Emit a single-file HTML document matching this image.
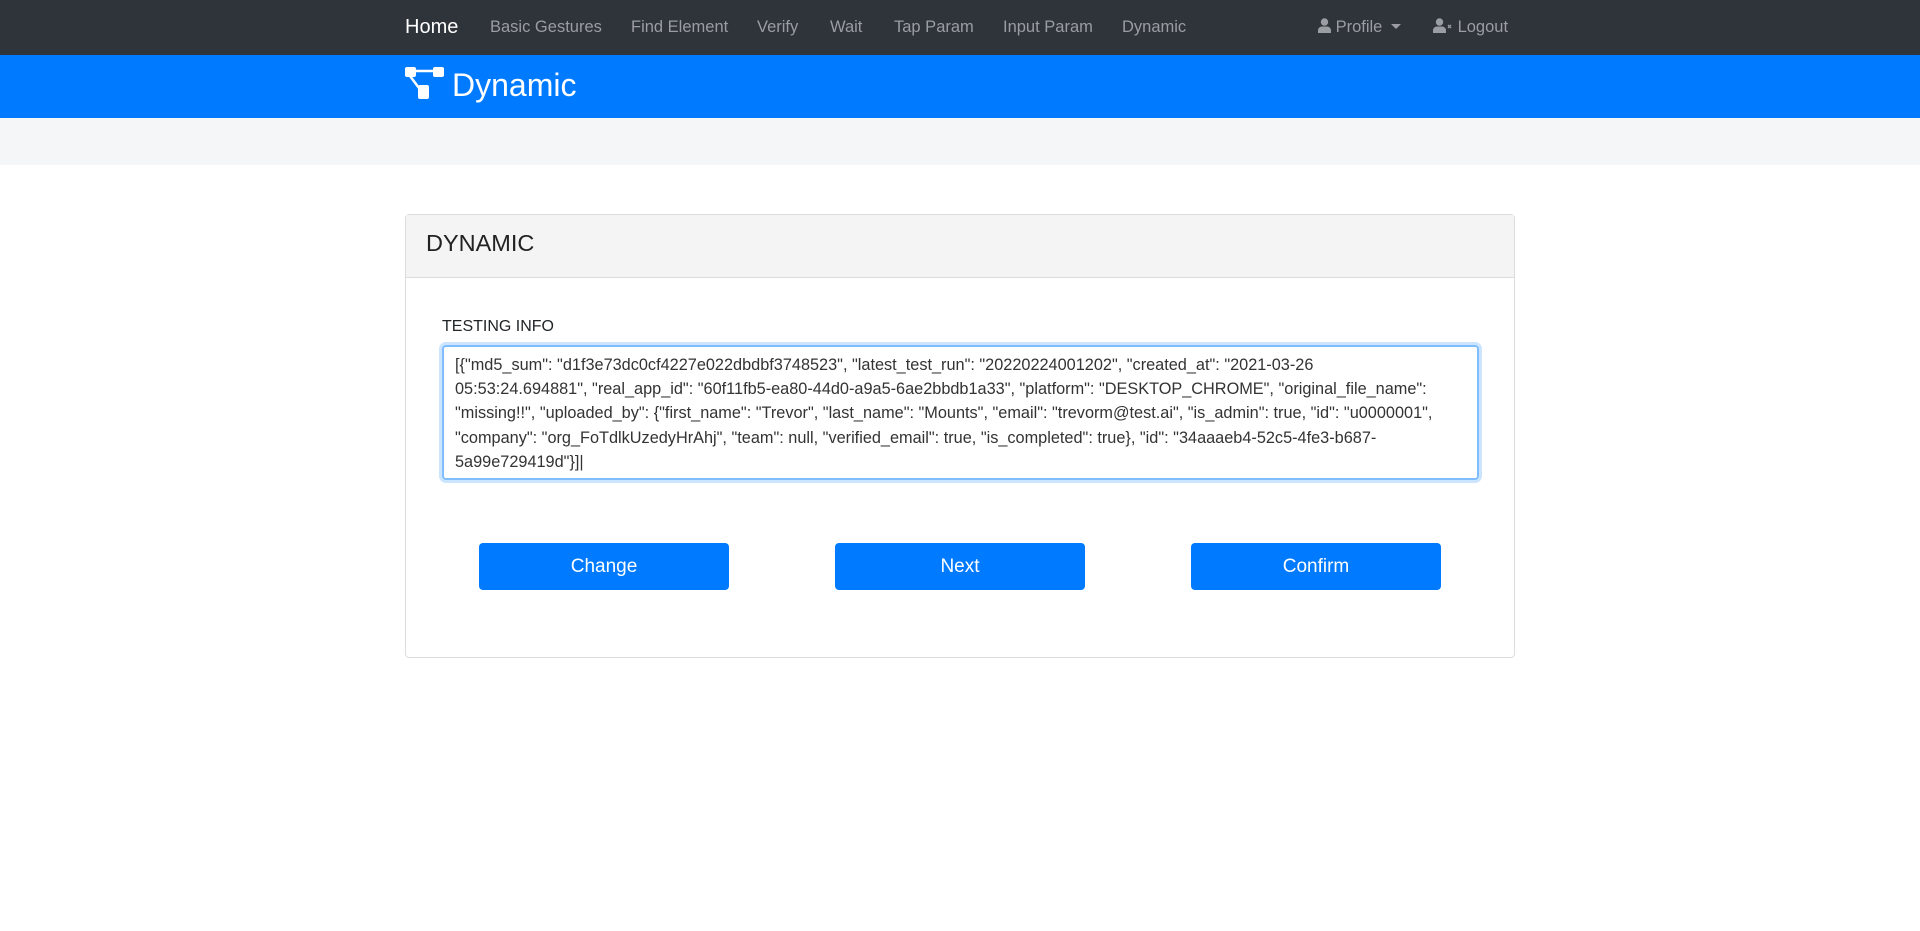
<!DOCTYPE html>
<html><head><meta charset="utf-8"><style>
*{box-sizing:border-box;margin:0;padding:0}
body{width:1920px;height:931px;background:#fff;font-family:"Liberation Sans",sans-serif;color:#212529;overflow:hidden;position:relative}
.nav{position:absolute;left:0;top:0;width:1920px;height:55px;background:#2f333a}
.nav span{position:absolute;top:18px;font-size:16.5px;color:#9a9da1;white-space:nowrap}
.nav .home{color:#fff;font-size:20px;top:16px}
.hdr{position:absolute;left:0;top:55px;width:1920px;height:63px;background:#007bff}
.hdr .t{position:absolute;left:452px;top:12px;color:#fff;font-size:32px}
.strip{position:absolute;left:0;top:118px;width:1920px;height:47px;background:#f5f6f7}
.card{position:absolute;left:405px;top:214px;width:1110px;height:444px;border:1px solid #dcdcdc;border-radius:4px}
.ch{height:63px;background:#f4f4f4;border-bottom:1px solid #dcdcdc;padding:15px 20px;font-size:23.5px;color:#222}
.lbl{position:absolute;left:36px;top:103px;font-size:16px;color:#212529}
.ta{position:absolute;left:36px;top:130px;width:1037px;height:135px;border:2px solid #80bdff;border-radius:4px;box-shadow:0 0 0 3px rgba(0,123,255,.2);padding:6px 11px;font-size:16.3px;line-height:24.2px;color:#333;overflow:hidden;white-space:nowrap}
.btn{position:absolute;top:328px;width:250px;height:47px;background:#007bff;border-radius:4px;color:#fff;font-size:19px;text-align:center;line-height:47px}
</style></head><body>
<div class="nav">
<span class="home" style="left:405px">Home</span>
<span style="left:490px">Basic Gestures</span>
<span style="left:631px">Find Element</span>
<span style="left:757px">Verify</span>
<span style="left:830px">Wait</span>
<span style="left:894px">Tap Param</span>
<span style="left:1003px">Input Param</span>
<span style="left:1122px">Dynamic</span>
<span style="left:1318px"><svg width="13" height="15" viewBox="0 0 13 15" style="vertical-align:-1px"><circle cx="6.5" cy="4" r="3.7" fill="#9a9da1"/><path d="M0 15v-2.5C0 10 2 8.5 4 8.5h5c2 0 4 1.5 4 4V15z" fill="#9a9da1"/></svg> Profile <span style="position:static;display:inline-block;border-top:5px solid #9a9da1;border-left:5px solid transparent;border-right:5px solid transparent;vertical-align:3px;margin-left:4px"></span></span>
<span style="left:1433px"><svg width="20" height="15" viewBox="0 0 20 15" style="vertical-align:-1px"><circle cx="6.5" cy="4" r="3.7" fill="#9a9da1"/><path d="M0 15v-2.5C0 10 2 8.5 4 8.5h5c2 0 4 1.5 4 4V15z" fill="#9a9da1"/><path d="M15 7l3 3M18 7l-3 3" stroke="#9a9da1" stroke-width="1.3"/></svg> Logout</span>
</div>
<div class="hdr">
<svg style="position:absolute;left:405px;top:12px" width="40" height="34" viewBox="0 0 40 34"><rect x="0" y="0" width="11" height="10" rx="2" fill="#fff"/><rect x="28" y="0" width="11" height="10" rx="2" fill="#fff"/><rect x="13" y="18" width="11" height="14" rx="2" fill="#fff"/><path d="M10 4h19M5 9l9 12" stroke="#fff" stroke-width="2.5"/></svg>
<div class="t">Dynamic</div></div>
<div class="strip"></div>
<div class="card">
<div class="ch">DYNAMIC</div>
<div class="lbl">TESTING INFO</div>
<div class="ta">[{"md5_sum": "d1f3e73dc0cf4227e022dbdbf3748523", "latest_test_run": "20220224001202", "created_at": "2021-03-26<br>05:53:24.694881", "real_app_id": "60f11fb5-ea80-44d0-a9a5-6ae2bbdb1a33", "platform": "DESKTOP_CHROME", "original_file_name":<br>"missing!!", "uploaded_by": {"first_name": "Trevor", "last_name": "Mounts", "email": "trevorm@test.ai", "is_admin": true, "id": "u0000001",<br>"company": "org_FoTdlkUzedyHrAhj", "team": null, "verified_email": true, "is_completed": true}, "id": "34aaaeb4-52c5-4fe3-b687-<br>5a99e729419d"}]|</div>
<div class="btn" style="left:73px">Change</div>
<div class="btn" style="left:429px">Next</div>
<div class="btn" style="left:785px">Confirm</div>
</div>
</body></html>
